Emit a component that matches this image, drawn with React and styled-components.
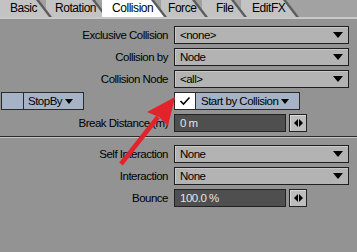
import React from "react";
import styled, { createGlobalStyle } from "styled-components";

const Global = createGlobalStyle`
  html, body { margin: 0; padding: 0; background: #939393; }
  body { font-family: "Liberation Sans", Arial, sans-serif; }
`;

const Panel = styled.div`
  position: relative;
  width: 357px;
  height: 252px;
  background: #939393;
  overflow: hidden;
  font-size: 11.5px;
  letter-spacing: -0.5px;
  color: #000;
`;

const TabBar = styled.div`
  display: flex;
  height: 17px;
  background: #a2a2a2;
  border-bottom: 2px solid #c9c9c9;
`;

const Tab = styled.div`
  position: relative;
  width: ${(p) => p.$w}px;
  margin-right: -6px;
  height: 17px;
  z-index: ${(p) => (p.$active ? 20 : p.$z)};
  background: #5c5c5c;
  clip-path: polygon(0 0, calc(100% - 13px) 0, 100% 100%, 0 100%);
  &::before {
    content: "";
    position: absolute;
    inset: 0;
    background: ${(p) => (p.$active ? "#ffffff" : "#c3c3c3")};
    clip-path: polygon(0 0, calc(100% - 16px) 0, calc(100% - 3px) 100%, 0 100%);
  }
`;

const TabLabel = styled.span`
  position: relative;
  display: block;
  padding-left: ${(p) => p.$pl}px;
  line-height: 17px;
  font-size: 12px;
  letter-spacing: -0.45px;
`;

const Form = styled.div`
  display: flex;
  flex-direction: column;
  padding-top: 7px;
`;

const Group = styled.div`
  display: grid;
  grid-template-columns: 168px 175px;
  grid-auto-rows: 18px;
  column-gap: 6px;
  row-gap: 4px;
`;

const Label = styled.div`
  height: 18px;
  line-height: 18px;
  text-align: right;
  white-space: nowrap;
`;

const Select = styled.div`
  box-sizing: border-box;
  height: 18px;
  display: flex;
  align-items: center;
  justify-content: space-between;
  padding: 0 5px 0 5px;
  background: #b3b3b3;
  border: 1px solid #1e1e1e;
  box-shadow: inset 1px 1px 0 #c9c9c9;
`;

const Caret = styled.span`
  width: 0;
  height: 0;
  border-left: 5px solid transparent;
  border-right: 5px solid transparent;
  border-top: 6px solid #000;
`;

const SmallCaret = styled(Caret)`
  border-left-width: 4px;
  border-right-width: 4px;
  border-top-width: 5px;
  margin-left: 3px;
`;

const ControlRow = styled.div`
  display: flex;
  gap: 3px;
  height: 18px;
`;

const Field = styled.div`
  box-sizing: border-box;
  width: 112px;
  height: 18px;
  line-height: 16px;
  padding-left: 5px;
  background: #4f4f4f;
  border: 1px solid #222;
  color: #e4e4e4;
`;

const Spinner = styled.div`
  box-sizing: border-box;
  width: 18px;
  height: 18px;
  display: flex;
  align-items: center;
  justify-content: center;
  gap: 1px;
  background: #bdbdbd;
  border: 1px solid #222;
  box-shadow: inset 1px 1px 0 #d8d8d8;
`;

const Tri = styled.span`
  width: 0;
  height: 0;
  border-top: 4px solid transparent;
  border-bottom: 4px solid transparent;
  ${(p) => (p.$dir === "left" ? "border-right: 4px solid #000;" : "border-left: 4px solid #000;")}
`;

const SplitButton = styled.div`
  display: flex;
  height: 18px;
`;

const BlueCell = styled.div`
  box-sizing: border-box;
  height: 18px;
  width: ${(p) => p.$w}px;
  display: flex;
  align-items: center;
  white-space: nowrap;
  padding-left: ${(p) => p.$pl || 0}px;
  background: #a6b2c5;
  border: 1px solid #2a2a2a;
  margin-left: ${(p) => (p.$joined ? "-1px" : "0")};
`;

const Check = styled.div`
  box-sizing: border-box;
  width: 22px;
  height: 18px;
  background: #fff;
  border: 1px solid #2a2a2a;
  display: flex;
  align-items: center;
  justify-content: center;
`;

const StopCell = styled.div`
  display: flex;
  justify-content: flex-start;
  padding-left: 1px;
`;

const Separator = styled.div`
  margin: 4px 0 7px;
  height: 1px;
  background: #2a2a2a;
  border-bottom: 1px solid #c4c4c4;
`;

const Overlay = styled.svg`
  position: absolute;
  left: 0;
  top: 0;
  pointer-events: none;
`;

const tabs = [
  { name: "Basic", w: 52, pl: 10 },
  { name: "Rotation", w: 62, pl: 9 },
  { name: "Collision", w: 65, pl: 10, active: true },
  { name: "Force", w: 47, pl: 7 },
  { name: "File", w: 45, pl: 14 },
  { name: "EditFX", w: 58, pl: 11 },
];

function Dropdown({ value }) {
  return (
    <Select>
      <span>{value}</span>
      <Caret />
    </Select>
  );
}

function NumberField({ value }) {
  return (
    <ControlRow>
      <Field>{value}</Field>
      <Spinner>
        <Tri $dir="left" />
        <Tri $dir="right" />
      </Spinner>
    </ControlRow>
  );
}

export default function App() {
  return (
    <>
      <Global />
      <Panel>
        <TabBar>
          {tabs.map((t, i) => (
            <Tab key={t.name} $w={t.w} $z={10 - i} $active={t.active}>
              <TabLabel $pl={t.pl}>{t.name}</TabLabel>
            </Tab>
          ))}
        </TabBar>
        <Form>
          <Group>
            <Label>Exclusive Collision</Label>
            <Dropdown value="<none>" />
            <Label>Collision by</Label>
            <Dropdown value="Node" />
            <Label>Collision Node</Label>
            <Dropdown value="<all>" />
            <StopCell>
              <SplitButton>
                <BlueCell $w={23} />
                <BlueCell $w={61} $pl={4} $joined>
                  StopBy
                  <SmallCaret />
                </BlueCell>
              </SplitButton>
            </StopCell>
            <ControlRow>
              <SplitButton>
                <Check>
                  <svg width="12" height="10" viewBox="0 0 12 10">
                    <path d="M1.5 5 L4.5 8 L10.5 1.5" fill="none" stroke="#000" strokeWidth="1.6" />
                  </svg>
                </Check>
                <BlueCell $w={105} $pl={5} $joined>
                  Start by Collision
                  <SmallCaret />
                </BlueCell>
              </SplitButton>
            </ControlRow>
            <Label>Break Distance (m)</Label>
            <NumberField value="0 m" />
          </Group>
          <Separator />
          <Group>
            <Label>Self Interaction</Label>
            <Dropdown value="None" />
            <Label>Interaction</Label>
            <Dropdown value="None" />
            <Label>Bounce</Label>
            <NumberField value="100.0 %" />
          </Group>
        </Form>
        <Overlay width="357" height="252" viewBox="0 0 357 252">
          <line x1="121" y1="164" x2="158" y2="117" stroke="#e3232b" strokeWidth="4.5" strokeLinecap="butt" />
          <polygon points="175,97 168,126 159,117 147,112" fill="#e3232b" />
        </Overlay>
      </Panel>
    </>
  );
}
